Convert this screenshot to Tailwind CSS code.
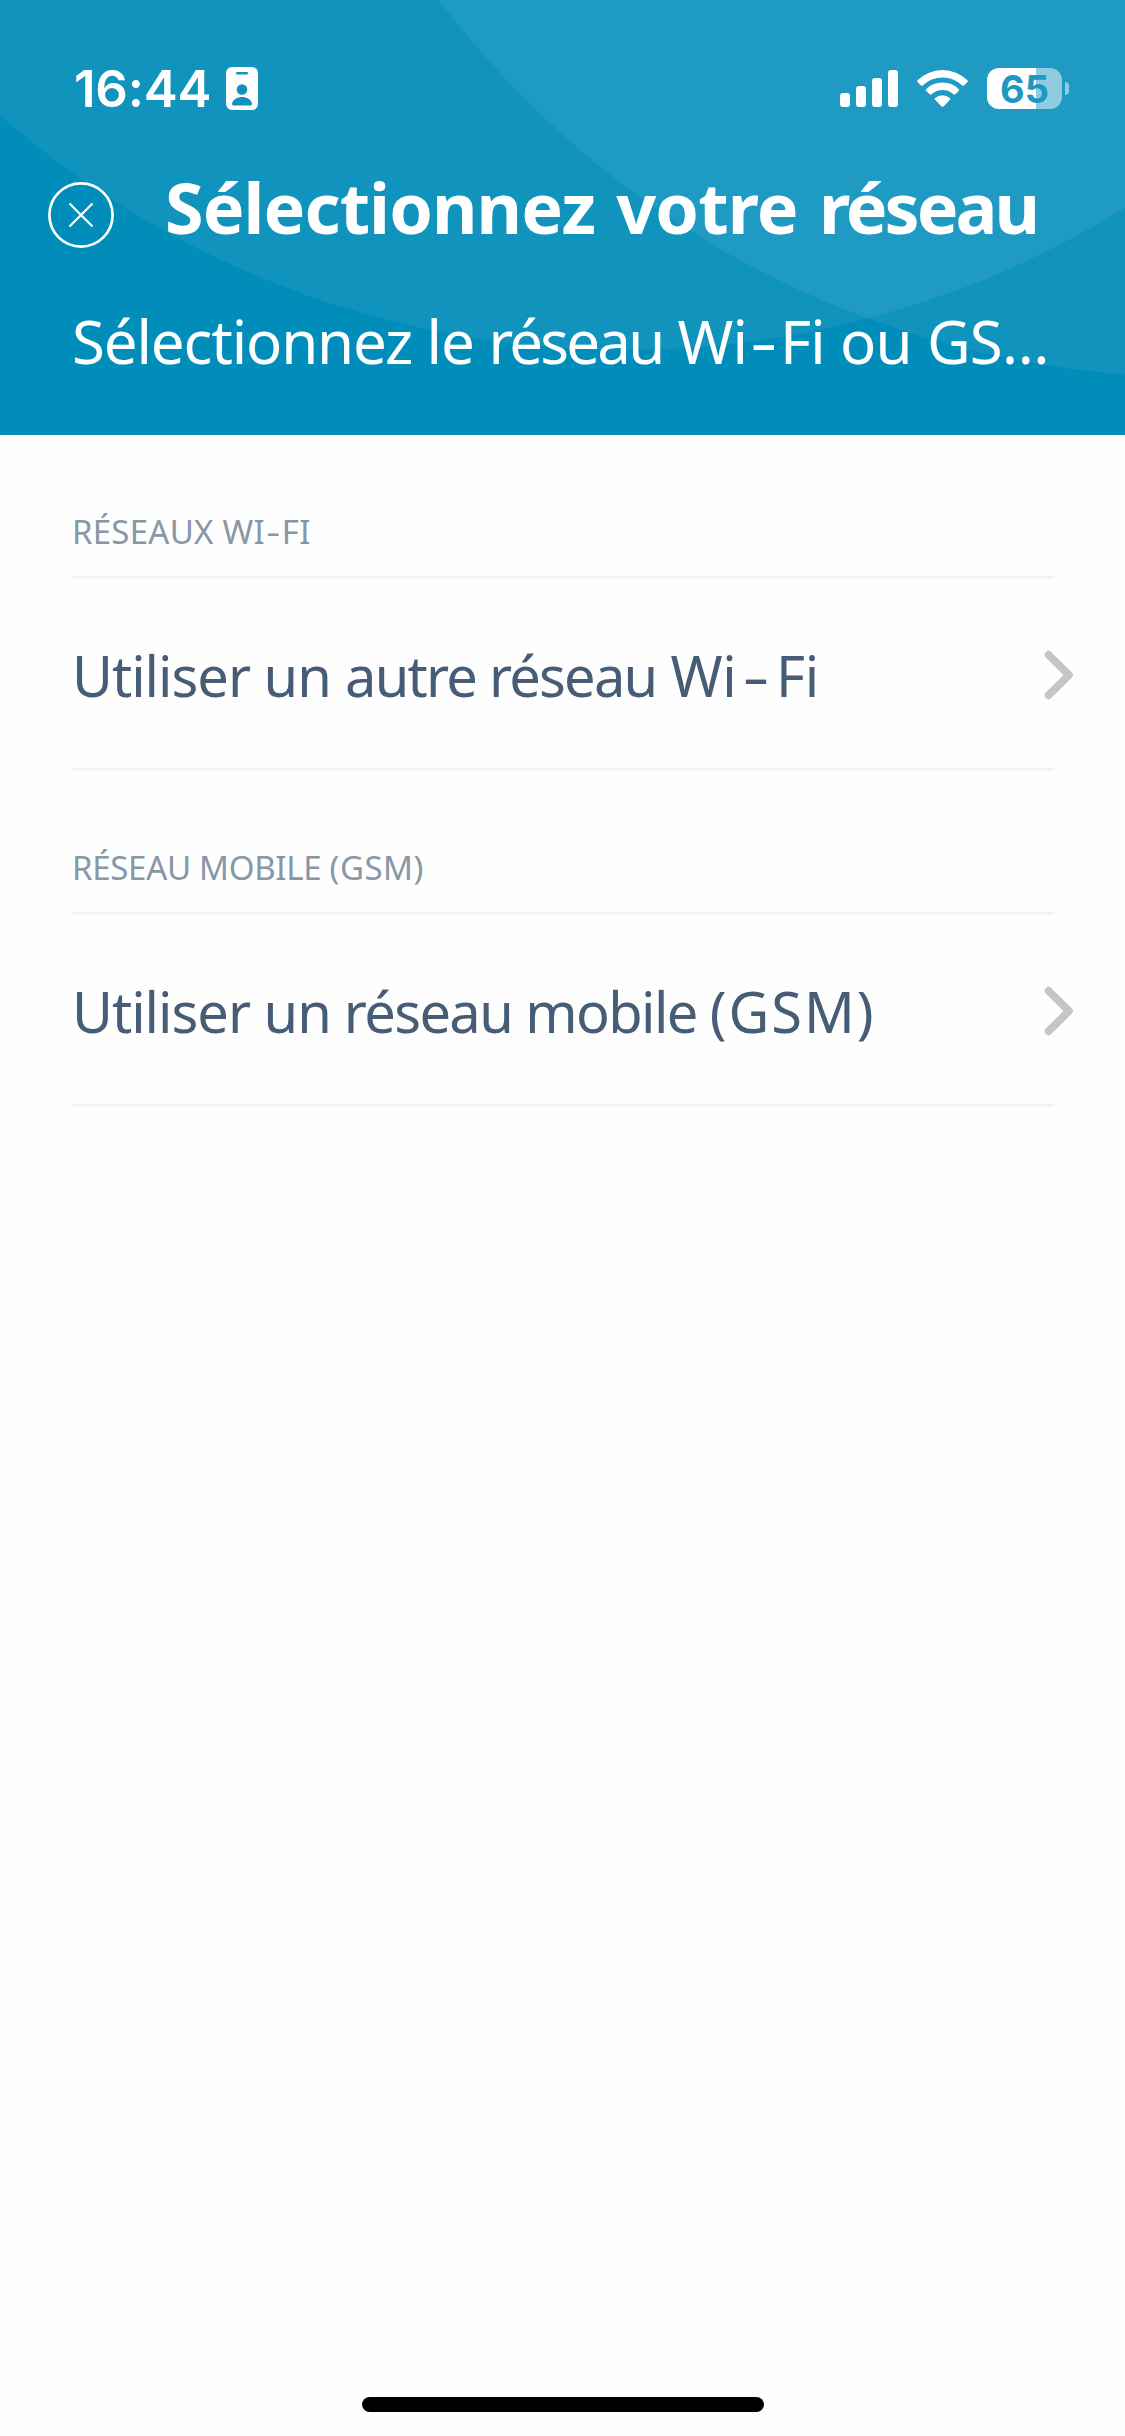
<!DOCTYPE html>
<html lang="fr">
<head>
    <meta charset="UTF-8">
    <meta name="viewport" content="width=device-width, initial-scale=1.0">
    <title>Sélectionnez votre réseau</title>
    <script src="https://cdn.jsdelivr.net/npm/@tailwindcss/browser@4"></script>
</head>
<body class="bg-white">
<div class="relative w-[1125px] h-[2436px] flex flex-col overflow-hidden bg-[#fefefe] font-['Noto_Sans',sans-serif]">

    <!-- Header -->
    <header class="relative h-[435px] shrink-0 bg-[#008dba] text-white overflow-hidden">
        <svg class="absolute inset-0 w-full h-full" viewBox="0 0 1125 435" fill="#fff" fill-opacity="0.063">
            <circle cx="625" cy="-600" r="950"/>
            <circle cx="1196" cy="-572" r="949"/>
        </svg>

        <div class="relative pt-[58px]">
            <!-- Status bar -->
            <div class="h-[61px] pl-[74px] pr-14 flex items-center">
                <span class="font-['Inter',sans-serif] font-semibold text-[51px] leading-[60px] tracking-[-0.2px]">16:44</span>
                <svg class="ml-[15px] w-8 h-[43px]" viewBox="0 0 32 43">
                    <rect width="32" height="43" rx="6" fill="#fff"/>
                    <rect x="10" y="5" width="12" height="2.6" rx="1.3" fill="#1092bd"/>
                    <circle cx="16" cy="22.5" r="5.3" fill="#1092bd"/>
                    <path d="M6 36.5C7 32.500 11 30 16 30s9 2.500 10 6.500c0 1.400-.6 2-2 2H8c-1.400 0-2-.6-2-2z" fill="#1092bd"/>
                </svg>
                <div class="ml-auto flex items-center">
                    <svg class="w-[58px] h-[37px]" viewBox="0 0 58 37" fill="#fff">
                        <rect x="0" y="23" width="10" height="14" rx="3"/>
                        <rect x="16" y="16" width="10" height="21" rx="3"/>
                        <rect x="32" y="8" width="10" height="29" rx="3"/>
                        <rect x="48" y="0" width="10" height="37" rx="3"/>
                    </svg>
                    <svg class="ml-[19px] w-[51px] h-[37px]" viewBox="0 0 51 37" fill="#fff">
                        <path d="M.6 10.200a35.500 35.500 0 0 1 49.800 0c.6.600.6 1.300 0 1.900l-3.300 3.300c-.6.600-1.300.6-1.900 0a28.200 28.200 0 0 0-39.400 0c-.6.600-1.300.6-1.900 0L.6 12.100c-.6-.6-.6-1.300 0-1.900z"/>
                        <path d="M9.300 19a23.200 23.200 0 0 1 32.400 0c.6.600.6 1.300 0 1.900l-3.400 3.400c-.6.600-1.200.6-1.800 0a15.900 15.900 0 0 0-22 0c-.6.600-1.200.6-1.800 0l-3.400-3.400c-.6-.6-.6-1.300 0-1.900z"/>
                        <path d="M18.200 27.900a11.300 11.300 0 0 1 14.600 0c.7.600.7 1.300.1 1.900l-6.400 6.600c-.6.600-1.400.6-2 0l-6.400-6.600c-.6-.6-.6-1.300.1-1.900z"/>
                    </svg>
                    <!-- Battery -->
                    <div class="ml-[19px] w-[75px] h-[41px] rounded-[12px] bg-linear-to-r from-white from-[65.3%] to-[#8fcce0] to-[65.3%] flex items-center justify-center">
                        <span class="font-['Inter',sans-serif] font-bold text-[38px] leading-none text-[#1f98c1]">65</span>
                    </div>
                    <div class="ml-[3px] w-1 h-[13px] rounded-r-full bg-[#8fcce0]"></div>
                </div>
            </div>

            <!-- Title -->
            <div class="mt-12 pl-12 flex items-start">
                <svg class="mt-[15px] w-[66px] h-[66px]" viewBox="0 0 66 66" fill="none" stroke="#fff">
                    <circle cx="33" cy="33" r="31.600" stroke-width="2.700"/>
                    <path d="M21.500 21.500l23 23M44.500 21.500l-23 23" stroke-width="2.200"/>
                </svg>
                <h1 class="ml-[51px] text-[70px] leading-[80px] font-bold tracking-[-0.9px] [word-spacing:4px] whitespace-nowrap">Sélectionnez votre <span class="tracking-[-3px]">réseau</span></h1>
            </div>
            <p class="mt-[57px] pl-[72px] text-[60px] leading-[72px] tracking-[-0.7px] whitespace-nowrap"><span class="tracking-[-1.15px]">Sélectionnez le</span> <span class="tracking-[-2.8px]">réseau</span> Wi<span class="inline-block mx-[7px] scale-x-140">-</span>Fi ou GS…</p>
        </div>
    </header>

    <!-- Networks -->
    <main class="px-[72px] text-[#475d75]">
        <section class="pt-[77px]">
            <h2 class="pb-6 text-[33px] leading-[40px] tracking-[0.25px] text-[#8797a6] border-b-3 border-[#f3f3f3]">RÉSEAUX WI<span class="inline-block mx-[3px] scale-x-130">-</span>FI</h2>
            <div class="h-48 flex items-center justify-between border-b-3 border-[#f3f3f3]">
                <span class="pt-[2px] text-[56px] leading-[64px] tracking-[-0.38px] whitespace-nowrap"><span class="tracking-[-1px]">Utiliser un</span> <span class="tracking-[-1.75px]">autre réseau</span> Wi<span class="inline-block mx-[11px] scale-x-150">-</span>Fi</span>
                <svg class="-mr-[21px] mt-[3px] w-[30px] h-[50px]" viewBox="0 0 30 50" fill="none" stroke="#c5c5c7" stroke-width="7.800" stroke-linecap="round" stroke-linejoin="round">
                    <path d="M4.500 4.700L25 25 4.500 45.300"/>
                </svg>
            </div>
        </section>
        <section class="pt-[77px]">
            <h2 class="pb-6 text-[33px] leading-[40px] tracking-[-0.3px] text-[#8797a6] border-b-3 border-[#f3f3f3]">RÉSEAU MOBILE <span class="tracking-[0.5px]">(GSM)</span></h2>
            <div class="h-48 flex items-center justify-between border-b-3 border-[#f3f3f3]">
                <span class="pt-[2px] text-[56px] leading-[64px] tracking-[-1.6px] whitespace-nowrap"><span class="tracking-[-1px]">Utiliser un</span> réseau mobile <span class="tracking-[2px]">(GSM)</span></span>
                <svg class="-mr-[21px] mt-[3px] w-[30px] h-[50px]" viewBox="0 0 30 50" fill="none" stroke="#c5c5c7" stroke-width="7.800" stroke-linecap="round" stroke-linejoin="round">
                    <path d="M4.500 4.700L25 25 4.500 45.300"/>
                </svg>
            </div>
        </section>
    </main>

    <!-- Home indicator -->
    <div class="mt-auto mb-6 mx-auto w-[402px] h-[15px] rounded-full bg-black"></div>
</div>
</body>
</html>
